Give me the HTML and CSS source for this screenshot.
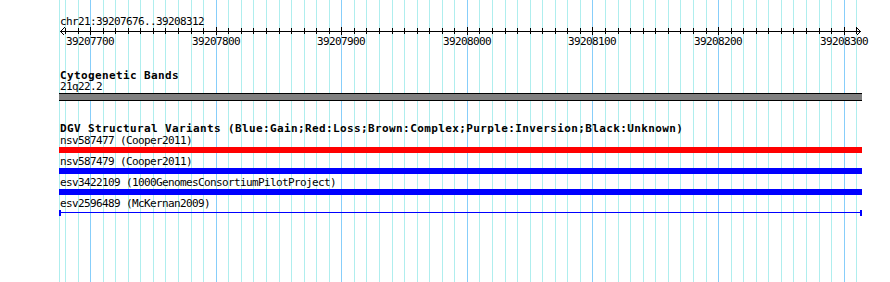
FILE: index.html
```html
<!DOCTYPE html>
<html lang="en">
<head>
    <meta charset="UTF-8">
    <title>chr21:39207676..39208312</title>
    <link rel="stylesheet" href="styles.css">
</head>
<body>

    <div class="browser">
        <!-- Grid lines and ruler ticks, drawn by the script below -->
        <svg class="grid" id="grid" width="890" height="282"></svg>

        <!-- Ruler -->
        <div class="ruler-title">chr21:39207676..39208312</div>
        <div class="ruler-scale" id="rulerScale"></div>

        <!-- Cytogenetic bands track -->
        <div class="track track-cyto">
            <div class="track-title">Cytogenetic Bands</div>
            <div class="feature-label">21q22.2</div>
            <div class="band"></div>
        </div>

        <!-- DGV structural variants track -->
        <div class="track track-dgv">
            <div class="track-title">DGV Structural Variants (Blue:Gain;Red:Loss;Brown:Complex;Purple:Inversion;Black:Unknown)</div>

            <div class="feature-label">nsv587477 (Cooper2011)</div>
            <div class="bar bar-loss"></div>

            <div class="feature-label">nsv587479 (Cooper2011)</div>
            <div class="bar bar-gain"></div>

            <div class="feature-label">esv3422109 (1000GenomesConsortiumPilotProject)</div>
            <div class="bar bar-gain"></div>

            <div class="feature-label">esv2596489 (McKernan2009)</div>
            <div class="bar bar-thin">
                <span class="cap"></span>
                <span class="line"></span>
                <span class="cap"></span>
            </div>
        </div>
    </div>

    <script>
        // Scale of the view: 637 bp over 800 px, starting at x = 60
        const start = 39207676;
        const end = 39208312;
        const padLeft = 60;
        const trackWidth = 800;
        const scale = trackWidth / (end - start + 1);

        const svgNS = 'http://www.w3.org/2000/svg';
        const grid = document.getElementById('grid');
        const rulerScale = document.getElementById('rulerScale');

        function xpos(bp) {
            return Math.round(padLeft + (bp - start) * scale);
        }

        function addRect(x, y, w, h, cls) {
            const r = document.createElementNS(svgNS, 'rect');
            r.setAttribute('x', x);
            r.setAttribute('y', y);
            r.setAttribute('width', w);
            r.setAttribute('height', h);
            r.setAttribute('class', cls);
            grid.appendChild(r);
        }

        // left edge line
        addRect(padLeft - 1, 0, 1, 282, 'grid-minor');

        // grid lines every 10 bp, darker every 100 bp
        for (let bp = Math.ceil(start / 10) * 10; bp <= end; bp += 10) {
            const major = bp % 100 === 0;
            addRect(xpos(bp), 0, 1, 282, major ? 'grid-major' : 'grid-minor');
        }

        // ruler axis
        addRect(padLeft, 31, trackWidth + 1, 1, 'axis');
        for (let bp = Math.ceil(start / 10) * 10; bp <= end; bp += 10) {
            const major = bp % 100 === 0;
            const x = xpos(bp);
            if (major) {
                addRect(x, 27, 1, 8, 'axis');

                const label = document.createElement('span');
                label.className = 'tick-label';
                label.textContent = bp;
                label.style.left = x + 'px';
                rulerScale.appendChild(label);
            } else {
                addRect(x, 28, 1, 6, 'axis');
            }
        }

        // arrow heads at both ends
        const arrows = document.createElementNS(svgNS, 'path');
        arrows.setAttribute('d', 'M64.5 27.5 L60.5 31.5 L64.5 35.5 M856.5 27.5 L860.5 31.5 L856.5 35.5');
        arrows.setAttribute('class', 'arrow');
        grid.appendChild(arrows);
    </script>
</body>
</html>
```

FILE: styles.css
```css
/* General styling */
body {
    margin: 0;
    background-color: #fff;
    color: #000;
    font-family: "DejaVu Sans Mono", "Liberation Mono", monospace;
    font-size: 11px;
}

.browser {
    position: relative;
    z-index: 0;
    width: 890px;
    height: 282px;
    padding-top: 15px;
    box-sizing: border-box;
    overflow: hidden;
    background-color: #fff;
}

/* Background grid + ruler */
.grid {
    position: absolute;
    top: 0;
    left: 0;
    z-index: -1;
    shape-rendering: crispEdges;
}

.grid-minor {
    fill: #afeeee;
}

.grid-major {
    fill: #87cefa;
}

.axis {
    fill: #000;
}

.arrow {
    fill: none;
    stroke: #000;
    stroke-width: 1;
}

/* Ruler */
.ruler-title {
    padding-left: 60px;
    height: 13px;
    line-height: 13px;
    letter-spacing: -0.62px;
    white-space: nowrap;
}

.ruler-scale {
    position: relative;
    height: 13px;
    margin-top: 7px;
    line-height: 13px;
    letter-spacing: -0.62px;
}

.tick-label {
    position: absolute;
    top: 0;
    transform: translateX(-50%);
    white-space: nowrap;
}

/* Tracks */
.track {
    margin-top: 21px;
}

.track-title {
    padding-left: 60px;
    height: 13px;
    line-height: 13px;
    font-weight: bold;
    letter-spacing: 0.38px;
    white-space: nowrap;
}

.track-cyto {
    margin-top: 22px;
}

.track-cyto .track-title {
    height: 11px;
    line-height: 11px;
}

.feature-label {
    padding-left: 60px;
    height: 12px;
    line-height: 12px;
    letter-spacing: -0.62px;
    white-space: nowrap;
}

.band {
    margin-left: 59px;
    width: 803px;
    height: 6px;
    background-color: #808080;
    border-top: 1px solid #000;
    border-bottom: 1px solid #000;
}

.bar {
    margin-left: 59px;
    width: 803px;
    height: 6px;
    margin-bottom: 3px;
}

.bar-loss {
    background-color: #f00;
}

.bar-gain {
    background-color: #00f;
}

.bar-thin {
    display: flex;
    align-items: flex-start;
}

.bar-thin .cap {
    width: 2px;
    height: 6px;
    background-color: #00f;
}

.bar-thin .line {
    flex: 1;
    height: 1px;
    margin-top: 2px;
    background-color: #00f;
}
```
